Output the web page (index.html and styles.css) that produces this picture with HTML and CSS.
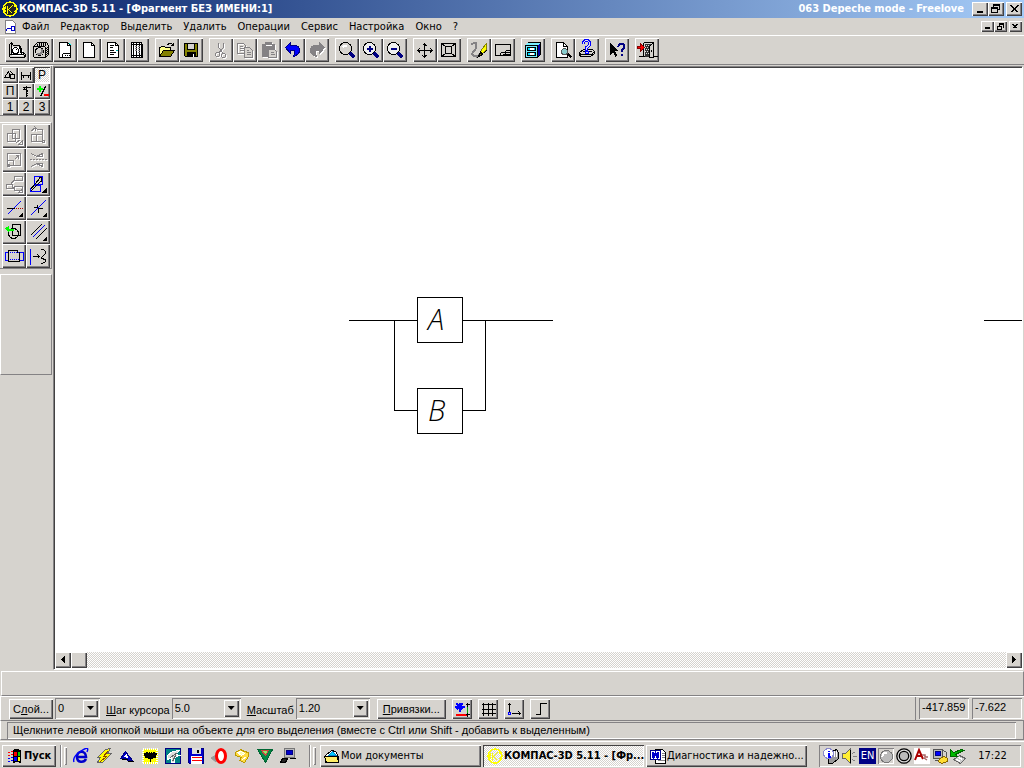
FILE: index.html
```html
<!DOCTYPE html>
<html lang="ru">
<head>
<meta charset="utf-8">
<title>КОМПАС-3D 5.11</title>
<link rel="stylesheet" href="styles.css">
</head>
<body>
<header class="titlebar">
  <svg class="ico i16" viewBox="-.5 -.5 16 16"><g stroke="#ff0"><circle cx="7.500" cy="7.500" r="7" fill="#222" stroke-width="1.500"/><path d="M5 4v8M10 4L6 8l4 4M3 5l-1 3 1 3M12 4l1 2M12 11l1-2" stroke-width="1.400"/></g></svg>
  <h1 class="title">КОМПАС-3D 5.11 - [Фрагмент БЕЗ ИМЕНИ:1]</h1>
  <span class="title track">063 Depeche mode - Freelove</span>
  <div class="winbtns">
    <button class="btn wb" aria-label="Свернуть"><svg class="ico" viewBox="-.5 -.5 16 14"><path d="M4 9h6M4 10h6"/></svg></button>
    <button class="btn wb" aria-label="Восстановить"><svg class="ico" viewBox="-.5 -.5 16 14"><path d="M5 5V2h6v5h-2M5 3h6M3 5h6v5H3zM3 6h6"/></svg></button>
    <button class="btn wb apart" aria-label="Закрыть"><svg class="ico" viewBox="-.5 -.5 16 14"><path d="M4 3l7 7M5 3l7 7M11 3l-7 7M12 3l-7 7"/></svg></button>
  </div>
</header>

<nav class="menubar">
  <svg class="ico i16" viewBox="-.5 -.5 16 16"><path d="M3 1h7l3 3v10H3z" fill="#fff" stroke="#848284"/><path d="M4 9h3M4 9v2M9 7h3v4H9zM7 9h2" stroke="#00c"/></svg>
  <a class="menu" href="#">Файл</a><a class="menu" href="#">Редактор</a><a class="menu" href="#">Выделить</a><a class="menu" href="#">Удалить</a><a class="menu" href="#">Операции</a><a class="menu" href="#">Сервис</a><a class="menu" href="#">Настройка</a><a class="menu" href="#">Окно</a><a class="menu" href="#">?</a>
  <div class="winbtns">
    <button class="btn mb" aria-label="Свернуть окно"><svg class="ico" viewBox="-.5 -.5 13 11"><path d="M3 6h5M3 7h5"/></svg></button>
    <button class="btn mb" aria-label="Восстановить окно"><svg class="ico" viewBox="-.5 -.5 13 11"><path d="M5 4V2h4v4H8M5 3h4M3 5h4v3H3z"/></svg></button>
    <button class="btn mb apart" aria-label="Закрыть окно"><svg class="ico" viewBox="-.5 -.5 13 11"><path d="M3 3l4 4M4 3l4 4M7 3L3 7M8 3L4 7"/></svg></button>
  </div>
</nav>

<div class="toolbar">
  <div class="group">
    <button class="btn tb" aria-label="Новая сборка"><svg class="ico" viewBox="-.5 -.5 24 24"><path d="M6 8h8l3 4v5H6z" fill="#fff" stroke="none"/><path d="M4 17V6l2-2 2 3h6l2 3v3l4 3v2l-2 1H5l-1-1zM4 16h13l3 1M6 4v12M14 8l2 8"/><circle cx="10" cy="12" r="3"/><path d="M10 12l1-1"/></svg></button>
    <button class="btn tb" aria-label="Новая деталь"><svg class="ico" viewBox="-.5 -.5 24 24"><path d="M4 8l4-4h9l2 3v9l-3 3H5l-1-1z"/><path d="M9 5h8M7 6h11M7 7h10M17 9v9M18 8v8" stroke-dasharray="1 1"/><path d="M4 8h11l1 1v10"/><circle cx="10" cy="13" r="4"/><path d="M8 14q0 2 2 2 3-1 2-5" stroke="#848284" stroke-width="2"/></svg></button>
    <button class="btn tb" aria-label="Новый лист"><svg class="ico" viewBox="-.5 -.5 24 24"><path d="M6 4h8l3 3v12H6z" fill="#fff"/><path d="M14 4v3h3M9 15h8M9 15v4M11 17h1M13 17h1M15 17h1"/><path d="M15 5h1M16 6h1" stroke="#0ff"/></svg></button>
    <button class="btn tb" aria-label="Новый фрагмент"><svg class="ico" viewBox="-.5 -.5 24 24"><path d="M6 4h8l3 3v12H6z" fill="#fff"/><path d="M14 4v3h3"/></svg></button>
    <button class="btn tb" aria-label="Новый текстовый документ"><svg class="ico" viewBox="-.5 -.5 24 24"><path d="M6 4h8l3 3v12H6z" fill="#fff"/><path d="M14 4v3h3M8 7h4M8 9h3M8 12h4M8 14h6M8 16h4"/><path d="M14 12h2" stroke="#0aa"/></svg></button>
    <button class="btn tb" aria-label="Новая спецификация"><svg class="ico" viewBox="-.5 -.5 24 24"><path d="M6 4h10v15H6z" fill="#fff"/><path d="M8 4v15M11 4v15M14 4v15M6 6h11v13M6 17h10"/><path d="M12 8h2M12 10h2M12 12h2M12 14h2M9 8h2M9 10h2M9 12h2" stroke="#848284"/></svg></button>
  </div>
  <div class="group">
    <button class="btn tb" aria-label="Открыть"><svg class="ico" viewBox="-.5 -.5 24 24"><path d="M4 18V9h1l1-1h3l1 1h5v3" fill="#ff8"/><path d="M4 18l4-6h11l-4 6z" fill="#848200"/><path d="M12 6l2-1h2l2 2M18 4v3h-3"/></svg></button>
    <button class="btn tb" aria-label="Сохранить"><svg class="ico" viewBox="-.5 -.5 24 24"><path d="M5 5h13v13H6l-1-1z" fill="#848200"/><path d="M8 5h7v6H8z" fill="#d6d3ce"/><path d="M8 14h8v4H8z" fill="#000"/><path d="M14 15v3" stroke="#fff"/></svg></button>
  </div>
  <div class="group">
    <button class="btn tb" disabled aria-label="Вырезать"><svg class="ico dim" viewBox="-.5 -.5 24 24"><path d="M9 4v5l5 6M14 4v5l-5 6"/><circle cx="8" cy="16" r="2"/><circle cx="14" cy="17" r="2"/></svg></button>
    <button class="btn tb" disabled aria-label="Копировать"><svg class="ico dim" viewBox="-.5 -.5 24 24"><path d="M4 5h6l2 2v8H4zM6 8h3M6 10h4M6 12h4"/><path d="M11 9h5l3 3v7h-8z" fill="#d6d3ce"/><path d="M13 12h2M13 14h4M13 16h4"/></svg></button>
    <button class="btn tb" disabled aria-label="Вставить"><svg class="ico dim" viewBox="-.5 -.5 24 24"><path d="M5 6h12v12H5zM8 4h6v3H8z" fill="#848284"/><path d="M8 7h6" stroke="#fff"/><path d="M11 11h6l2 2v6h-8z" fill="#d6d3ce"/><path d="M13 14h3M13 16h4"/></svg></button>
    <button class="btn tb" aria-label="Отменить"><svg class="ico" viewBox="-.5 -.5 24 24"><path d="M4 9l5-5v3h4c4 0 6 3 5 6-1 3-3 4-6 5 2-4 2-6-1-6H9v3z" fill="#00f" stroke="#000082"/></svg></button>
    <button class="btn tb" disabled aria-label="Повторить"><svg class="ico dim" viewBox="-.5 -.5 24 24"><path d="M19 9l-5-5v3h-4c-4 0-6 3-5 6 1 3 3 4 6 5-2-4-2-6 1-6h2v3z" fill="#848284"/></svg></button>
  </div>
  <div class="group">
    <button class="btn tb" aria-label="Увеличить рамкой"><svg class="ico" viewBox="-.5 -.5 24 24"><path d="M14 14l5 5" stroke="#000082" stroke-width="3"/><circle cx="10" cy="10" r="6" fill="#d6d3ce"/><path d="M7 9l2-2h2" stroke="#fff" stroke-width="2"/></svg></button>
    <button class="btn tb" aria-label="Увеличить"><svg class="ico" viewBox="-.5 -.5 24 24"><path d="M14 14l5 5" stroke="#000082" stroke-width="3"/><circle cx="10" cy="10" r="6" fill="#efefef"/><path d="M7 10h6M10 7v6" stroke="#000082" stroke-width="2"/></svg></button>
    <button class="btn tb" aria-label="Уменьшить"><svg class="ico" viewBox="-.5 -.5 24 24"><path d="M14 14l5 5" stroke="#000082" stroke-width="3"/><circle cx="10" cy="10" r="6" fill="#efefef"/><path d="M7 10h6" stroke="#000082" stroke-width="2"/></svg></button>
  </div>
  <div class="group">
    <button class="btn tb" aria-label="Сдвинуть"><svg class="ico" viewBox="-.5 -.5 24 24"><path d="M11 5v14M4 12h15M9 7l2-2 2 2M9 17l2 2 2-2M6 10l-2 2 2 2M17 10l2 2-2 2M10 7h3M10 17h3M6 11v3M17 11v3"/></svg></button>
    <button class="btn tb" aria-label="Показать всё"><svg class="ico" viewBox="-.5 -.5 24 24"><path d="M4 5h14v13H4zM8 8h6v7H8zM4 5l4 3M18 5l-4 3M4 18l4-3M18 18l-4-3"/></svg></button>
  </div>
  <div class="group">
    <button class="btn tb" aria-label="Обновить изображение"><svg class="ico" viewBox="-.5 -.5 24 24"><path d="M4 6q5-4 5 1 0 4-4 7-1 4 4 4l3-2" stroke="#848284" stroke-width="2"/><path d="M12 16l2-5 5-6v6l-4 4z" fill="#ff0" stroke="#848200"/><path d="M11 18l2-4 2 2zM13 13l3 3M16 15l3-3"/></svg></button>
    <button class="btn tb" aria-label="Окна"><svg class="ico" viewBox="-.5 -.5 24 24"><path d="M4 6h15v11H4zM9 14h10M9 14v3M14 12v5M14 12h5M11 16h8"/></svg></button>
  </div>
  <div class="group">
    <button class="btn tb" aria-label="Библиотеки"><svg class="ico" viewBox="-.5 -.5 24 24"><path d="M4 7l3-3h12v12l-3 3H4z" fill="#0000a0"/><path d="M4 7h12v12H4z" fill="#7ef"/><path d="M5 6l2-1h11l-2 1z" fill="#7ef" stroke="#7ef"/><path d="M6 9h8v3H6zM6 14h8v3H6z" fill="#0df"/><path d="M8 10h4M8 15h4" stroke="#fff" stroke-width="2"/></svg></button>
  </div>
  <div class="group">
    <button class="btn tb" aria-label="Просмотр"><svg class="ico" viewBox="-.5 -.5 24 24"><path d="M5 4h7l4 4v11H5z" fill="#fff"/><path d="M12 4v4h4"/><path d="M16 15l4 4" stroke-width="2"/><circle cx="13" cy="13" r="3" fill="#8cc" stroke="#555"/></svg></button>
    <button class="btn tb" aria-label="Печать"><svg class="ico" viewBox="-.5 -.5 24 24"><path d="M4 14l4-3h9l2 2-3 3H5zM4 14v3l2 1h9l4-3v-2" fill="#d6d3ce"/><path d="M7 13h9M7 16h9"/><path d="M8 5q0-3 3-3t3 3-3 4v3" stroke="#00f" stroke-width="3"/><path d="M8 5q0-3 3-3t3 3-3 4v2" stroke="#dde"/><path d="M10 13h3v2h-3z" fill="#dde" stroke="#00f"/></svg></button>
  </div>
  <div class="group">
    <button class="btn tb" aria-label="Справка"><svg class="ico" viewBox="-.5 -.5 24 24"><path d="M5 5v11l3-3 2 5 1-1-2-5h3z" fill="#000"/><path d="M13 8q0-3 3-3t3 3-3 3v2M16 15v2" stroke="#000082" stroke-width="2"/></svg></button>
  </div>
  <div class="group">
    <button class="btn tb" aria-label="Выход"><svg class="ico" viewBox="-.5 -.5 24 24"><path d="M8 4h10v14M8 4v14M3 18h8"/><path d="M9 5h8v10h-3v3H9z" fill="#333" stroke="none"/><path d="M9 5h8M8 7h9M9 9h8M8 11h9M9 13h7M8 15h7" stroke-dasharray="1 1" stroke="#ddd"/><path d="M14 8l4-4v15h-4z" fill="#d6d3ce"/><path d="M18 18h4M16 11v2"/><path d="M2 8h3V5l4 4-4 4v-3H2z" fill="#f00" stroke="#840000"/></svg></button>
  </div>
</div>

<main class="work">
  <aside class="side">
    <div class="palette small">
      <button class="btn" aria-label="Геометрия"><svg class="ico" viewBox="-.5 -.5 16 16"><path d="M2 10l4-6 2 6zM8 4l3 3"/><circle cx="10" cy="9" r="2.500"/></svg></button>
      <button class="btn" aria-label="Размеры"><svg class="ico" viewBox="-.5 -.5 16 16"><path d="M3 4v8M12 4v8M3 8h9M5 7v3M10 7v3"/></svg></button>
      <button class="btn pressed">P</button>
      <button class="btn">П</button>
      <button class="btn" aria-label="Обозначения"><svg class="ico" viewBox="-.5 -.5 16 16"><path d="M8 2v11M4 4h8M4 6h4M6 3v2M7 10h2M7 12h2M9 6v2"/></svg></button>
      <button class="btn" aria-label="Параметризация"><svg class="ico" viewBox="-.5 -.5 16 16"><path d="M5 2v6M2 5h6" stroke="#0f0" stroke-width="2"/><path d="M11 3L6 13"/><path d="M9 11h5" stroke="#f00" stroke-width="2"/></svg></button>
      <button class="btn">1</button><button class="btn">2</button><button class="btn">3</button>
    </div>
    <div class="palette large">
      <button class="btn" disabled aria-label="Сдвиг"><svg class="ico dim" viewBox="-.5 -.5 24 24"><path d="M5 9h8v8H5zM10 5h7v9h-7zM14 18l4-3M16 20l4-4v4z"/></svg></button>
      <button class="btn" disabled aria-label="Поворот"><svg class="ico dim" viewBox="-.5 -.5 24 24"><path d="M5 10h11v7H5zM10 5h6v5M5 7q1-3 4-3M8 2l2 2-2 3M10 10v7"/><circle cx="17" cy="17" r="1"/></svg></button>
      <button class="btn" disabled aria-label="Масштабирование"><svg class="ico dim" viewBox="-.5 -.5 24 24"><path d="M5 5h13v12H5zM5 12h6v5M12 11l4-4M13 7h3v3"/><circle cx="6" cy="17" r="1"/></svg></button>
      <button class="btn" disabled aria-label="Симметрия"><svg class="ico dim" viewBox="-.5 -.5 24 24"><path d="M5 5l5 3h6V5l-6 3M5 18l5-3h6v3l-6-3"/><path d="M3 11h18" stroke-dasharray="2 1"/></svg></button>
      <button class="btn" disabled aria-label="Копирование"><svg class="ico dim" viewBox="-.5 -.5 24 24"><path d="M12 4h8v4h-8zM4 12h6v4H4zM12 14h8v4h-8zM8 12l4-5M10 15l2 1M16 20l4-4v4z"/></svg></button>
      <button class="btn" aria-label="Деформация"><svg class="ico" viewBox="-.5 -.5 24 24"><path d="M8 4h8v8H8zM4 16l3-3h7v6H4z" stroke="#00f"/><path d="M4 17L14 5M4 19L14 9M12 5h3v4"/><path d="M20 16v4h-4z" fill="#000"/></svg></button>
      <button class="btn" aria-label="Усечь кривую"><svg class="ico" viewBox="-.5 -.5 24 24"><path d="M5 18L18 5" stroke="#00f"/><path d="M4 12h8"/><path d="M13 12h8" stroke="#a00" stroke-dasharray="1 1"/><path d="M20 17v3h-3z" fill="#000"/></svg></button>
      <button class="btn" aria-label="Разбить кривую"><svg class="ico" viewBox="-.5 -.5 24 24"><path d="M4 19L19 4" stroke="#00f"/><path d="M11 8v3H7M12 16v-4h4"/><path d="M20 17v3h-3z" fill="#000"/></svg></button>
      <button class="btn" aria-label="Очистить область"><svg class="ico" viewBox="-.5 -.5 24 24"><circle cx="11" cy="13" r="5"/><path d="M10 4h8v11h-8z"/><path d="M4 9h7" stroke="#0f0" stroke-width="2"/><path d="M6 6v5L3 8z" fill="#0f0" stroke="#0f0"/></svg></button>
      <button class="btn" aria-label="Эквидистанта"><svg class="ico" viewBox="-.5 -.5 24 24"><path d="M4 15L15 4M9 19L20 8"/><path d="M6 17L18 5" stroke="#00f"/><path d="M20 17v3h-3z" fill="#000"/></svg></button>
      <button class="btn" aria-label="Контур"><svg class="ico" viewBox="-.5 -.5 24 24"><path d="M6 8H3v8h3M17 8h4v8h-4" stroke="#00f"/><path d="M6 6h9v2h2v9H6z"/><path d="M7 8h9M7 15h9" stroke="#00f" stroke-dasharray="1 1"/></svg></button>
      <button class="btn" aria-label="Преобразовать"><svg class="ico" viewBox="-.5 -.5 24 24"><path d="M4 4v16" stroke="#00f"/><path d="M6 12h7M11 10l2 2-2 2M14 5h3l2 2v2l-4 4v1l4 1v2l-3 2h-2"/></svg></button>
    </div>
    <div class="panel"></div>
  </aside>
  <section class="canvas">
    <svg class="drawing" aria-label="Чертёж">
      <g class="lines"><path d="M294 252.500H362M408 252.500H498M339.500 252V342.500H362M408 342.500H430.500V252M929 252.500H967"/><path d="M362.500 229.500h45v45h-45zM362.500 320.500h45v45h-45z"/></g>
      <text x="373" y="262">A</text><text x="373" y="353">B</text>
    </svg>
    <div class="scroll">
      <button class="btn" aria-label="Влево"><svg class="ico" viewBox="-.5 -.5 16 16"><path d="M6 7l3-3v6z" fill="#000"/></svg></button>
      <div class="btn thumb"></div>
      <button class="btn end" aria-label="Вправо"><svg class="ico" viewBox="-.5 -.5 16 16"><path d="M9 7L6 4v6z" fill="#000"/></svg></button>
    </div>
  </section>
</main>

<div class="props"></div>

<div class="params">
  <div class="fields">
    <button class="btn word layer">С<u>л</u>ой...</button>
    <span class="combo c1"><select aria-label="Слой"><option>0</option></select><span class="btn drop"></span></span>
    <label for="step"><u>Ш</u>аг курсора</label>
    <span class="combo c2"><select id="step"><option>5.0</option></select><span class="btn drop"></span></span>
    <label for="scale"><u>М</u>асштаб</label>
    <span class="combo c3"><select id="scale"><option>1.20</option></select><span class="btn drop"></span></span>
    <button class="btn word snaps"><u>П</u>ривязки...</button>
    <div class="modes">
      <button class="btn" aria-label="Привязка"><svg class="ico" viewBox="-.5 -.5 20 20"><path d="M7 3v9M2 7h10M4 4l6 6M10 4l-6 6" stroke="#00f" stroke-width="2"/><path d="M3 15h11" stroke="#f00" stroke-width="2"/><path d="M15 5v10" stroke="#0a0"/><path d="M13 5h4M15 3v4M13 15h4M15 13v4"/></svg></button>
      <button class="btn" aria-label="Сетка"><svg class="ico" viewBox="-.5 -.5 20 20"><path d="M5 3v13M10 3v13M14 3v13M3 5h14M3 10h14M3 14h14"/></svg></button>
      <button class="btn" aria-label="Система координат"><svg class="ico" viewBox="-.5 -.5 20 20"><path d="M5 12V4M3 6l2-2 2 2M7 14h9M14 12l2 2-2 2"/><path d="M4 13h2v2H4z" stroke="#00f"/></svg></button>
      <button class="btn" aria-label="Ортогональ"><svg class="ico" viewBox="-.5 -.5 20 20"><path d="M5 15h5V4h6"/></svg></button>
    </div>
  </div>
  <div class="coords"><output class="sunk">-417.859</output><output class="sunk">-7.622</output></div>
</div>

<div class="status"><p class="sunk">Щелкните левой кнопкой мыши на объекте для его выделения (вместе с Ctrl или Shift - добавить к выделенным)</p></div>

<footer class="taskbar">
  <button class="btn start"><svg class="ico i16" viewBox="-.5 -.5 16 16"><path d="M7 2q3-2 7 0v12q-4-2-7 0z" fill="#000"/><path d="M8 4h2v3H8z" fill="#f00" stroke="#f00"/><path d="M12 4h1v3h-1z" fill="#0c0" stroke="#0c0"/><path d="M8 9h2v3H8z" fill="#00f" stroke="#00f"/><path d="M12 9h1v3h-1z" fill="#ff0" stroke="#ff0"/><path d="M1 4h2M4 3h2M1 7h2M4 6h2" stroke="#f00"/><path d="M1 10h2M4 9h2M1 13h2M4 12h2" stroke="#00f"/></svg>Пуск</button>
  <span class="sep"></span><span class="handle"></span>
  <div class="quick">
    <a href="#" aria-label="Internet Explorer"><svg class="ico i16 smooth" viewBox="0 0 16 16"><path d="M4 9h9c0-7-9-7-9 0 0 6 7 6 9 2" stroke="#00c" stroke-width="2.600"/><path d="M1 14Q-1 9 8 3t6 1" stroke="#00f" stroke-width="1.400"/></svg></a>
    <a href="#" aria-label="Winamp"><svg class="ico i16" viewBox="-.5 -.5 16 16"><path d="M9 1l5-1-3 5h4L6 14H1l3-5H1z" fill="#ff0" stroke="#666"/><path d="M11 3L7 8h3l-6 5" stroke="#840"/></svg></a>
    <a href="#" aria-label="Треугольник"><svg class="ico i16" viewBox="-.5 -.5 16 16"><path d="M1 10L6 3l7 9H8l-1-2z" fill="#00c" stroke="#000082"/><path d="M5 8l2-2 1 3z" fill="#fff" stroke="#fff"/><path d="M2 11h6M8 13h6"/></svg></a>
    <a href="#" aria-label="The Bat!"><svg class="ico i16" viewBox="-.5 -.5 16 16"><path d="M0 0h15v15H0z" fill="#ff0" stroke="#fff" stroke-dasharray="1 1" stroke-width="3"/><path d="M2 5l3-1 1 2 1-2 1 1 1-1 1 2 1-2 3 1-1 4h-1l-1-1-1 2-1-1-1 3-1-3-1 1-1-2-2 1z" fill="#000"/></svg></a>
    <a href="#" aria-label="Рабочий стол"><svg class="ico i16" viewBox="-.5 -.5 16 16"><path d="M0 0h15v15H0z" fill="#008284" stroke="#000082"/><path d="M2 7l5-4 7-1-4 4 4 1-5 2v5H6V9L2 11z" fill="#ddd" stroke="#fff"/><path d="M5 9l7-5M10 7l-3 6" stroke="#666"/></svg></a>
    <a href="#" aria-label="Дискета"><svg class="ico i16" viewBox="-.5 -.5 16 16"><path d="M0 0h15v15H1l-1-1z" fill="#00c" stroke="#000082"/><path d="M4 0h8v5H4z" fill="#ddd" stroke="#ddd"/><path d="M9 1v3" stroke-width="2"/><path d="M3 8h10v7H3z" fill="#fff" stroke="#fff"/><path d="M3 9h10M3 12h10" stroke="#f00"/></svg></a>
    <a href="#" aria-label="Opera"><svg class="ico i16 smooth" viewBox="0 0 16 16"><path d="M0 10l5-3v7z" fill="#999" stroke="#999"/><ellipse cx="10" cy="8" rx="4.500" ry="6.500" fill="#fff" stroke="#f00" stroke-width="3"/></svg></a>
    <a href="#" aria-label="Почта"><svg class="ico i16" viewBox="-.5 -.5 16 16"><path d="M1 4l5-3 4 2 4 1v4l-4 6-5-2 2-3-6-2z" fill="#fd4" stroke="#b90"/><path d="M3 4l4-1 3 2-3 2zM8 11l4-3" fill="#ffa" stroke="#fff"/></svg></a>
    <a href="#" aria-label="Клевер"><svg class="ico i16" viewBox="-.5 -.5 16 16"><path d="M0 1h15L8 14z" fill="#084" stroke="#063"/><path d="M4 2h7L8 7z" fill="#8e6" stroke="#c44"/></svg></a>
    <a href="#" aria-label="Сеть"><svg class="ico i16" viewBox="-.5 -.5 16 16"><path d="M4 0h10v9H4z" fill="#bbb" stroke="#777"/><path d="M6 2h6v4H6z" fill="#00c" stroke="#000082"/><path d="M9 10h6"/><path d="M0 14l2-4h5l-2 4z" fill="#222"/></svg></a>
  </div>
  <span class="sep"></span><span class="handle"></span>
  <div class="tasks">
    <button class="btn task"><svg class="ico i16" viewBox="-.5 -.5 16 16"><path d="M1 7l6-5 4 1 3 5v6H1z" fill="#fff"/><path d="M4 7l4-4 4 4z" fill="#0cf" stroke="#08c"/><path d="M0 8h13l1 6H2z" fill="#fe6"/></svg><span>Мои документы</span></button>
    <button class="btn task active"><svg class="ico i16" viewBox="-.5 -.5 16 16"><g stroke="#ff0"><circle cx="7.500" cy="7.500" r="7" stroke-width="1.500"/><path d="M5 4v8M10 4L6 8l4 4M3 5l-1 3 1 3M12 4l1 2M12 11l1-2" stroke-width="1.400"/></g></svg><span>КОМПАС-3D 5.11 - [Фр...</span></button>
    <button class="btn task"><svg class="ico i16" viewBox="-.5 -.5 16 16"><path d="M5 1h7l3 3v11H5z" fill="#fff"/><path d="M11 5h3M11 7h3M11 9h3M7 12h7" stroke="#848284"/><path d="M0 2h10v9H0z" fill="#fff" stroke="#000082"/><path d="M2 4l1 5 2-4 2 4 1-5" stroke="#00c" stroke-width="2"/></svg><span>Диагностика и надежно...</span></button>
  </div>
  <div class="tray sunk">
    <svg class="ico i16" viewBox="-.5 -.5 16 16"><path d="M5 5l8-4 2 3v6l-6 5H5z" fill="#999"/><path d="M11 2v6M13 2v6" stroke="#fff"/><circle cx="5" cy="5" r="5" fill="#fff" stroke="#88c"/><path d="M5 2v1M4 5h1v3M4 8h3" stroke="#00f" stroke-width="2"/></svg>
    <svg class="ico i16" viewBox="-.5 -.5 16 16"><path d="M1 5h3l5-5v15l-5-5H1z" fill="#fe3" stroke="#666"/><path d="M9 1v13"/><path d="M11 5l3-2M11 8h4M11 11l3 2" stroke="#848284"/></svg>
    <span class="lang">EN</span>
    <svg class="ico i16" viewBox="-.5 -.5 16 16"><path d="M0 15V0h15" stroke="#848284"/><path d="M15 0v15H0" stroke="#fff"/><circle cx="8" cy="8" r="6" fill="#bbb" stroke="#777"/><path d="M4 8q0-4 4-4" stroke="#fff" stroke-width="2"/></svg>
    <svg class="ico i16 smooth" viewBox="0 0 16 16"><circle cx="8" cy="8" r="7.200" fill="#ddd" stroke-width="1.300"/><circle cx="8" cy="8" r="4.700" fill="#bbb" stroke-width="1.300"/></svg>
    <svg class="ico i16 smooth" viewBox="0 0 16 16"><path d="M0 0h16v16H0z" fill="#fff" stroke="none"/><path d="M1 12L5 2l4 9M3 8h5" stroke="#a00" stroke-width="2"/><path d="M8 7h3v2h3M10 10l3 2" stroke="#a66" stroke-width="1.500"/></svg>
    <svg class="ico i16" viewBox="-.5 -.5 16 16"><path d="M1 1h9v9H1z" fill="#bbb" stroke="#555"/><path d="M3 3h5v4H3z" fill="#00f" stroke="#000082"/><path d="M11 2l3 2v5M2 12h5" stroke="#555"/><path d="M7 10l5-2 3 2v3l-6 2-3-2z" fill="#fd3" stroke="#860"/></svg>
    <svg class="ico i16" viewBox="-.5 -.5 16 16"><path d="M3 11l6-4 6 3-5 5z" fill="#ccc" stroke="#666"/><path d="M6 11l4 2M8 9l4 2" stroke="#fff"/><path d="M0 1v7h7L5 6l8-4-2-1-8 3z" fill="#0b0" stroke="#060"/></svg>
    <time>17:22</time>
  </div>
</footer>
</body>
</html>
```

FILE: styles.css
```css
:root {
  --face: #d6d3ce;
  --shade: #848284;
  --dark: #424142;
  --ui: "Liberation Sans", Arial, sans-serif;
  --shell: "DejaVu Sans Condensed", "DejaVu Sans", sans-serif;
  --hatch: repeating-conic-gradient(#fff 0 25%, var(--face) 0 50%) 0 0 / 2px 2px;
}
* { box-sizing: border-box; }
body {
  margin: 0;
  min-height: 100vh;
  display: flex;
  flex-direction: column;
  background: var(--face);
  color: #000;
  font: 11px/14px var(--ui);
  overflow: hidden;
}
button, select { font: inherit; color: inherit; }
.ico {
  display: block;
  flex: none;
  width: 100%;
  fill: none;
  stroke: #000;
  shape-rendering: crispEdges;
}
.smooth { shape-rendering: auto; }
.i16 { width: 16px; height: 16px; }
.dim { stroke: var(--shade); filter: drop-shadow(1px 1px 0 #fff); }
.btn {
  display: block;
  margin: 0;
  padding: 0;
  border: 0;
  background: var(--face);
  box-shadow: inset 1px 1px #fff, inset -1px -1px var(--dark), inset -2px -2px var(--shade);
}
.sunk { box-shadow: inset 1px 1px var(--shade), inset -1px -1px #fff; }

.titlebar {
  display: flex;
  align-items: center;
  height: 18px;
  padding: 0 2px;
  background: linear-gradient(90deg, #08246b, #a5cbf7);
}
.title {
  margin: 0 0 0 1px;
  color: #fff;
  font: bold 11px/14px var(--shell);
  white-space: nowrap;
}
.track { margin-left: auto; }
.winbtns { display: flex; margin-left: auto; }
.track + .winbtns { margin-left: 8px; }
.wb { width: 16px; height: 14px; }
.mb { width: 13px; height: 11px; }
.apart { margin-left: 2px; }

.menubar {
  display: flex;
  align-items: center;
  height: 18px;
  padding: 0 2px 0 0;
  border-bottom: 1px solid #fff;
  font-family: var(--shell);
}
.menu { padding: 0 5px 0 6px; color: inherit; text-decoration: none; }
.menubar .i16 { margin-left: 2px; margin-right: -2px; }

.toolbar {
  display: flex;
  gap: 6px;
  height: 29px;
  padding: 2px 5px;
  border-bottom: 1px solid var(--shade);
}
.group { display: flex; }
.tb { width: 24px; height: 24px; }

.work { display: flex; flex: 1; min-height: 0; padding-right: 1px; }
.side { flex: none; width: 53px; border-top: 1px solid #fff; }
.palette {
  display: grid;
  width: 52px;
  padding: 1px 1px 0 2px;
  border-right: 1px solid var(--shade);
  border-bottom: 1px solid var(--shade);
}
.palette .btn { text-align: center; font-size: 12px; line-height: 16px; }
.small { grid-template-columns: repeat(3, 16px); grid-auto-rows: 16px; }
.large {
  grid-template-columns: repeat(2, 24px);
  grid-auto-rows: 24px;
  margin-top: 6px;
  border-top: 1px solid #fff;
}
.palette .pressed {
  background: var(--hatch);
  box-shadow: inset 1px 1px var(--dark), inset -1px -1px #fff;
}
.panel {
  height: 101px;
  margin-top: 5px;
  width: 52px;
  border: 1px solid var(--shade);
  border-top-color: #fff;
  border-left-color: #fff;
}
.canvas {
  flex: 1;
  min-width: 0;
  display: flex;
  flex-direction: column;
  margin-top: 1px;
  padding: 1px 0 0 1px;
  border: 1px solid #fff;
  border-color: var(--shade) #fff #fff var(--shade);
  background: #fff;
  box-shadow: inset 1px 1px var(--dark);
}
.drawing { display: block; flex: 1; width: 100%; min-height: 0; overflow: hidden; }
.lines { fill: none; stroke: #000; shape-rendering: crispEdges; }
.drawing text { font: italic 300 29px "Open Sans", "Noto Sans", sans-serif; }
.scroll { display: flex; height: 16px; margin-bottom: 1px; background: var(--hatch); }
.scroll .btn { width: 16px; height: 16px; }
.scroll .end { margin-left: auto; }

.props {
  height: 25px;
  margin: 1px 0 0 1px;
  border: 1px solid #fff;
  border-bottom-color: var(--shade);
  border-right-color: var(--shade);
}
.params {
  display: flex;
  justify-content: space-between;
  height: 25px;
  border-top: 1px solid #fff;
  border-bottom: 1px solid var(--shade);
  border-left: 1px solid #fff;
}
.fields { display: flex; align-items: center; padding-left: 8px; white-space: nowrap; }
.word { height: 20px; }
.layer { width: 44px; margin-right: 2px; }
.snaps { width: 69px; margin-left: 7px; }
.combo { position: relative; display: block; height: 21px; }
.combo select {
  appearance: none;
  display: block;
  width: 100%;
  height: 21px;
  padding: 0 3px 2px;
  border: 0;
  border-radius: 0;
  background: var(--face);
  box-shadow: inset 1px 1px var(--shade), inset -1px -1px #fff;
}
.drop {
  position: absolute;
  top: 2px;
  right: 2px;
  width: 15px;
  height: 17px;
  pointer-events: none;
}
.drop::after {
  content: "";
  display: block;
  margin: 6px 4px;
  width: 7px;
  height: 4px;
  background: #000;
  clip-path: polygon(0 0, 100% 0, 50% 100%);
}
.c1 { width: 45px; }
.c2 { width: 69px; }
.c3 { width: 74px; }
.fields label { padding: 2px 2px 0 6px; }
.modes { display: flex; gap: 6px; margin-left: 6px; }
.modes .btn { width: 20px; height: 20px; }
.coords { display: flex; gap: 3px; padding: 1px 2px 1px 3px; border-left: 1px solid var(--shade); }
.coords output { width: 50px; height: 21px; padding: 2px 3px; }

.status {
  height: 19px;
  padding: 1px 7px 0 6px;
  border: solid var(--shade);
  border-width: 0 1px 1px 0;
  border-left: 1px solid #fff;
}
.status p { margin: 0; height: 17px; padding: 1px 6px; overflow: hidden; white-space: nowrap; }

.taskbar {
  display: flex;
  align-items: center;
  height: 27px;
  margin-top: 1px;
  padding: 2px 3px 1px 2px;
  border-top: 1px solid #fff;
  font-family: var(--shell);
}
.start {
  display: flex;
  align-items: center;
  gap: 2px;
  width: 54px;
  height: 22px;
  padding-left: 4px;
  font-weight: bold;
}
.sep { width: 2px; height: 22px; margin-left: 4px; border-left: 1px solid var(--shade); border-right: 1px solid #fff; }
.handle { width: 3px; height: 18px; margin: 0 4px 0 2px; box-shadow: inset 1px 1px #fff, inset -1px -1px var(--shade); }
.quick { display: flex; gap: 7px; padding: 0 9px 0 2px; }
.tasks { display: flex; flex: 1; gap: 2px; min-width: 0; }
.task {
  display: flex;
  align-items: center;
  gap: 1px;
  flex: 0 1 161px;
  min-width: 0;
  height: 22px;
  padding: 0 4px;
  white-space: nowrap;
  overflow: hidden;
}
.active {
  background: var(--hatch);
  box-shadow: inset 1px 1px var(--dark), inset -1px -1px #fff;
  font-weight: bold;
}
.tray { display: flex; align-items: center; gap: 2px; flex: none; width: 202px; height: 22px; padding: 0 4px; }
.lang { width: 17px; height: 16px; line-height: 16px; background: #000084; color: #fff; text-align: center; }
.tray time { margin: 0 auto; }
```
